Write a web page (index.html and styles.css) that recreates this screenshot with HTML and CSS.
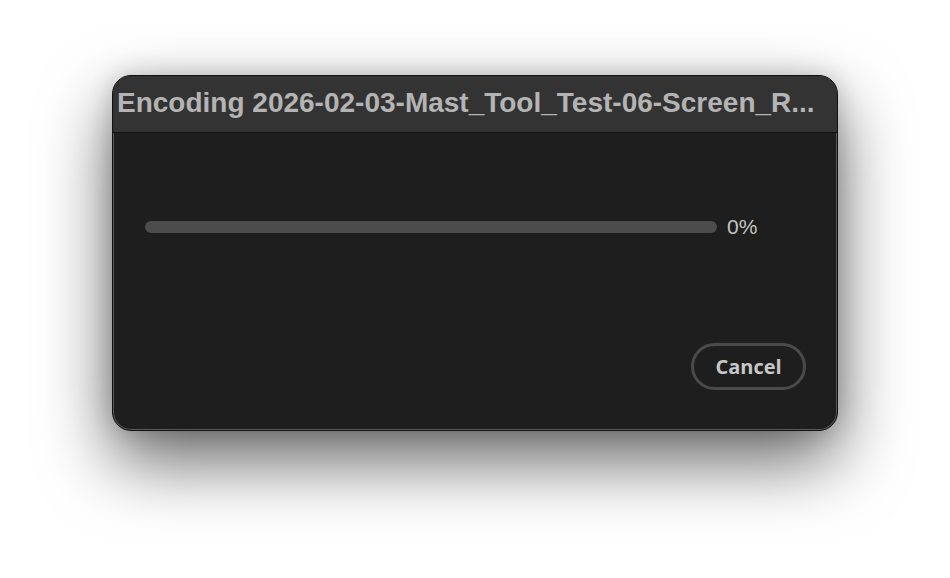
FILE: index.html
```html
<!DOCTYPE html>
<html>
<head>
<meta charset="utf-8">
<link rel="stylesheet" href="styles.css">
</head>
<body>
<div class="stage">
  <div class="window">
    <div class="titlebar">
      <span class="title">Encoding 2026-02-03-Mast_Tool_Test-06-Screen_R...</span>
    </div>
    <div class="content">
      <div class="progress-row">
        <div class="track"></div>
        <span class="pct">0%</span>
      </div>
      <div class="actions">
        <button class="cancel">Cancel</button>
      </div>
    </div>
  </div>
</div>
</body>
</html>
```

FILE: styles.css
```css
html, body {
  margin: 0;
  padding: 0;
  background: #ffffff;
}
.stage {
  width: 950px;
  height: 578px;
  padding-top: 75px;
  box-sizing: border-box;
  display: flex;
  justify-content: center;
  align-items: flex-start;
}
.window {
  width: 726px;
  height: 356px;
  box-sizing: border-box;
  border-radius: 19px;
  background: #1e1e1e;
  border: 1px solid #111;
  box-shadow: inset 0 0 0 1px #5a5a5a, 0 30px 70px rgba(0,0,0,0.6), 0 0 24px rgba(0,0,0,0.18);
  overflow: hidden;
  display: flex;
  flex-direction: column;
}
.titlebar {
  height: 57px;
  flex: none;
  background: #333333;
  border-bottom: 1px solid #111;
  box-sizing: border-box;
  display: flex;
  align-items: center;
  padding-left: 4px;
  overflow: hidden;
  white-space: nowrap;
}
.title {
  font-family: "Liberation Sans", Arial, sans-serif;
  font-weight: bold;
  font-size: 28px;
  color: #b4b4b4;
  padding-bottom: 2px;
}
.content {
  flex: 1;
  display: flex;
  flex-direction: column;
  padding: 82px 32px 40px 32px;
}
.progress-row {
  display: flex;
  align-items: center;
  gap: 10px;
}
.track {
  width: 572px;
  height: 12px;
  border-radius: 6px;
  background: #4c4c4c;
}
.pct {
  font-family: "Liberation Sans", Arial, sans-serif;
  font-size: 21px;
  color: #c4c4c4;
}
.actions {
  margin-top: auto;
  display: flex;
  justify-content: flex-end;
}
.cancel {
  width: 115px;
  height: 47px;
  border-radius: 24px;
  border: 3px solid #4a4a4a;
  background: transparent;
  color: #c8c8c8;
  font-family: "Open Sans", sans-serif;
  font-weight: 700;
  font-size: 20px;
  padding: 0;
  margin-right: -1px;
}
```
